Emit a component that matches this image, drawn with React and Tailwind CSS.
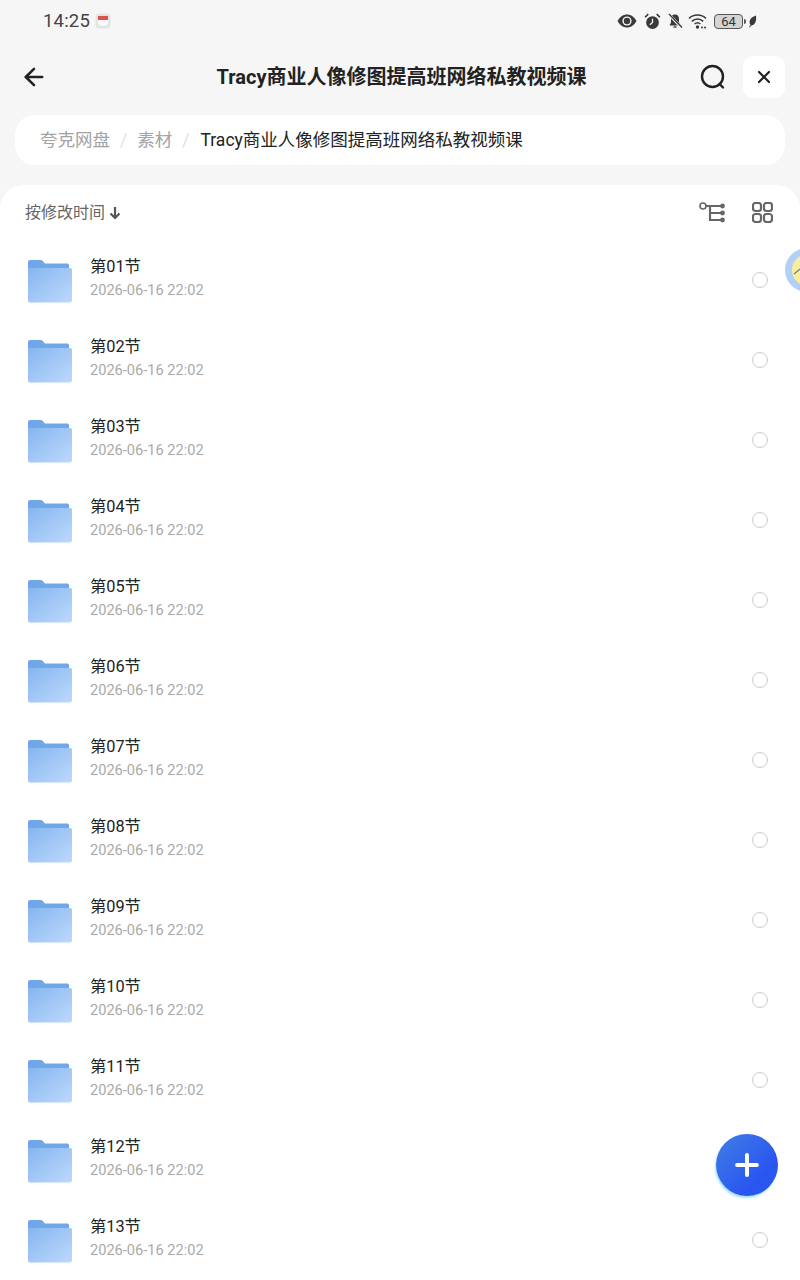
import { ArrowLeft, X, Plus } from "lucide-react";

const rows = [
  "第01节",
  "第02节",
  "第03节",
  "第04节",
  "第05节",
  "第06节",
  "第07节",
  "第08节",
  "第09节",
  "第10节",
  "第11节",
  "第12节",
  "第13节",
];

function FolderIcon({ id }) {
  return (
    <svg width="46" height="44" viewBox="0 0 46 44" className="mt-[2px] shrink-0">
      <defs>
        <linearGradient id={id} x1="0" y1="0" x2="1" y2="1">
          <stop offset="0" stopColor="#86b6f0" />
          <stop offset="1" stopColor="#bdd9fc" />
        </linearGradient>
      </defs>
      <path
        d="M1 3 a2 2 0 0 1 2-2 h11 a2 2 0 0 1 1.500 0.700 l2.500 2.800 h22 a2 2 0 0 1 2 2 V20 H1 Z"
        fill="#6fa7e8"
      />
      <path
        d="M1 9 h42.500 a1.500 1.500 0 0 1 1.500 1.500 V41.500 a2 2 0 0 1-2 2 H3 A2 2 0 0 1 1 41.500 Z"
        fill={`url(#${id})`}
      />
      <rect x="37" y="14" width="3" height="1.500" fill="#a5c7f2" />
      <rect x="37" y="18" width="3" height="1.500" fill="#a5c7f2" />
    </svg>
  );
}

function StatusIcons() {
  return (
    <div className="flex items-center text-[#3a3a3a]">
      <svg width="20" height="14" viewBox="0 0 20 14">
        <path d="M0.500 7 C3 2.500 6.500 0.500 10 0.500 S17 2.500 19.500 7 C17 11.500 13.500 13.500 10 13.500 S3 11.500 0.500 7 Z" fill="currentColor" />
        <circle cx="10" cy="7" r="4.600" fill="#f6f6f6" />
        <circle cx="10" cy="7" r="3.200" fill="currentColor" />
      </svg>
      <svg width="17" height="17" viewBox="0 0 16 16" className="ml-[7px]">
        <circle cx="8" cy="9" r="6" fill="currentColor" />
        <path d="M8 5.500 V9 L5.500 11" stroke="#f6f6f6" strokeWidth="1.200" fill="none" />
        <path d="M1 4 L4 1 M15 4 L12 1" stroke="currentColor" strokeWidth="1.600" />
      </svg>
      <svg width="16" height="16" viewBox="0 0 16 16" className="ml-[6px]">
        <path d="M8 1.500 C5.200 1.500 4 3.500 4 6 V9.500 L2.500 12.500 H13.500 L12 9.500 V6 C12 3.500 10.800 1.500 8 1.500 Z" fill="currentColor" />
        <path d="M6.500 14 H9.500" stroke="currentColor" strokeWidth="1.400" />
        <path d="M2 1.500 L14.500 14.500" stroke="#f6f6f6" strokeWidth="2.600" />
        <path d="M2 1 L15 14.500" stroke="currentColor" strokeWidth="1.300" />
      </svg>
      <svg width="20" height="16" viewBox="0 0 20 16" className="ml-[5px]">
        <path d="M1 5.500 C5.500 0.800 13.500 0.800 18 5.500" stroke="currentColor" strokeWidth="1.500" fill="none" />
        <path d="M3.800 8.400 C7 5.200 12 5.200 15.200 8.400" stroke="currentColor" strokeWidth="1.500" fill="none" />
        <path d="M6.600 11 C8.300 9.500 10.700 9.500 12.400 11" stroke="currentColor" strokeWidth="1.500" fill="none" />
        <circle cx="9.500" cy="14" r="1.700" fill="currentColor" />
        <circle cx="14" cy="14.500" r="1" fill="currentColor" />
        <circle cx="17" cy="14.500" r="1" fill="currentColor" />
      </svg>
      <div className="ml-[6px] flex items-center gap-[1px]">
        <div className="flex h-[15px] w-[29px] items-center justify-center rounded-[4px] border border-[#555] bg-[#d4d4d4] text-[13px] leading-none text-[#333]">
          64
        </div>
        <div className="h-[5px] w-[2px] rounded-r-sm bg-[#555]" />
      </div>
      <svg width="9" height="13" viewBox="0 0 9 13" className="ml-[2px]">
        <path d="M8 0.500 C8.500 5 8 9.500 3.500 10.500 L1.500 12.500 L1 12 L2.500 10 C0 6 3 2 8 0.500 Z" fill="currentColor" />
      </svg>
    </div>
  );
}

export default function App() {
  return (
    <div
      className="relative h-[1280px] w-[800px] overflow-hidden bg-[#f6f6f6]"
      style={{ fontFamily: 'Roboto, "Noto Sans CJK SC", sans-serif' }}
    >
      {/* status bar */}
      <div className="flex h-[42px] items-center justify-between pl-[43px] pr-[43px]">
        <div className="flex items-center gap-[5px]">
          <span className="pt-[1px] text-[18.5px] tracking-[0.2px] text-[#444]">14:25</span>
          <svg width="16" height="16" viewBox="0 0 16 16">
            <rect x="0.500" y="0.500" width="15" height="15" rx="4" fill="#e4e4e4" />
            <rect x="3" y="3" width="10" height="4" fill="#d9534f" />
            <path d="M3 7 H13 V10 C13 12 10 13 8 13 S3 12 3 10 Z" fill="#fafafa" />
          </svg>
        </div>
        <StatusIcons />
      </div>

      {/* title bar */}
      <div className="flex h-[70px] items-center pl-[20px] pr-[15px]">
        <ArrowLeft size={28} strokeWidth={2.2} className="text-[#222]" />
        <div className="flex-1 pl-[56px] text-center text-[20px] font-bold leading-none text-[#222]">
          Tracy商业人像修图提高班网络私教视频课
        </div>
        <svg width="28" height="28" viewBox="0 0 28 28" className="mr-[16px] text-[#222]">
          <circle cx="13.500" cy="13.500" r="10.500" stroke="currentColor" strokeWidth="2.400" fill="none" />
          <path d="M20.500 21 L24 24.500" stroke="currentColor" strokeWidth="2.400" strokeLinecap="round" />
        </svg>
        <div className="flex h-[42px] w-[42px] items-center justify-center rounded-[10px] bg-white">
          <X size={20} strokeWidth={2.6} className="text-[#222]" />
        </div>
      </div>

      {/* breadcrumb */}
      <div className="mx-[15px] mt-[3px] flex h-[50px] items-center rounded-[20px] bg-white pl-[25px] text-[17.5px]">
        <span className="text-[#a3a3a3]">夸克网盘</span>
        <span className="mx-[10px] text-[#e2e2e2]">/</span>
        <span className="text-[#a3a3a3]">素材</span>
        <span className="ml-[10px] mr-[11px] text-[#e2e2e2]">/</span>
        <span className="text-[#222]">Tracy商业人像修图提高班网络私教视频课</span>
      </div>

      {/* file list */}
      <div className="mt-[20px] rounded-t-[24px] bg-white">
        <div className="flex h-[55px] items-center justify-between pl-[25px] pr-[27px]">
          <div className="flex items-center gap-[4px] text-[16px] text-[#666]">
            按修改时间
            <svg width="12" height="14" viewBox="0 0 12 14" fill="none" stroke="#555" strokeWidth="2.200">
              <path d="M6 1 V12 M1.500 7.500 L6 12 L10.500 7.500" />
            </svg>
          </div>
          <div className="flex items-center gap-[27px] text-[#666]">
            <svg width="26" height="22" viewBox="0 0 26 22" fill="none" stroke="currentColor" strokeWidth="2.200">
              <circle cx="4" cy="4" r="3" strokeWidth="1.600" />
              <path d="M7 4 H23 M11 4 V18 H23 M11 11 H23" />
              <circle cx="23.500" cy="4" r="1.300" fill="currentColor" />
              <circle cx="23.500" cy="11" r="1.300" fill="currentColor" />
              <circle cx="23.500" cy="18" r="1.300" fill="currentColor" />
            </svg>
            <svg width="21" height="21" viewBox="0 0 21 21" fill="none" stroke="currentColor" strokeWidth="2.200">
              <rect x="1" y="1" width="8" height="8" rx="2.500" />
              <rect x="12" y="1" width="8" height="8" rx="2.500" />
              <rect x="1" y="12" width="8" height="8" rx="2.500" />
              <rect x="12" y="12" width="8" height="8" rx="2.500" />
            </svg>
          </div>
        </div>

        {rows.map((name, i) => (
          <div key={name} className="flex h-[80px] items-center pl-[27px] pr-[32px]">
            <FolderIcon id={`folder-${i}`} />
            <div className="ml-[17px] flex-1 pb-[3px]">
              <div className="text-[16.3px] leading-[23px] text-[#222]">{name}</div>
              <div className="text-[14.6px] leading-[25px] text-[#aaa]">2026-06-16 22:02</div>
            </div>
            <div className="h-[16px] w-[16px] rounded-full border-[1.5px] border-[#cdcdcd]" />
          </div>
        ))}
      </div>

      {/* floating helper */}
      <div className="absolute left-[785px] top-[248px] flex h-[44px] w-[44px] items-center rounded-full bg-[#b4cff5] pl-[7px]">
        <svg width="32" height="32" viewBox="0 0 32 32">
          <circle cx="16" cy="16" r="16" fill="#f7eea0" />
          <path d="M2 20 L8 15" stroke="#777" strokeWidth="1.200" />
        </svg>
      </div>

      {/* add button */}
      <div className="absolute left-[716px] top-[1134px] flex h-[62px] w-[62px] items-center justify-center rounded-full bg-[linear-gradient(135deg,#3f7fe6,#2a56f0_70%)] shadow-[-1px_2px_2px_rgba(100,210,255,0.6)]">
        <Plus size={34} strokeWidth={2.8} className="text-white" />
      </div>
    </div>
  );
}
